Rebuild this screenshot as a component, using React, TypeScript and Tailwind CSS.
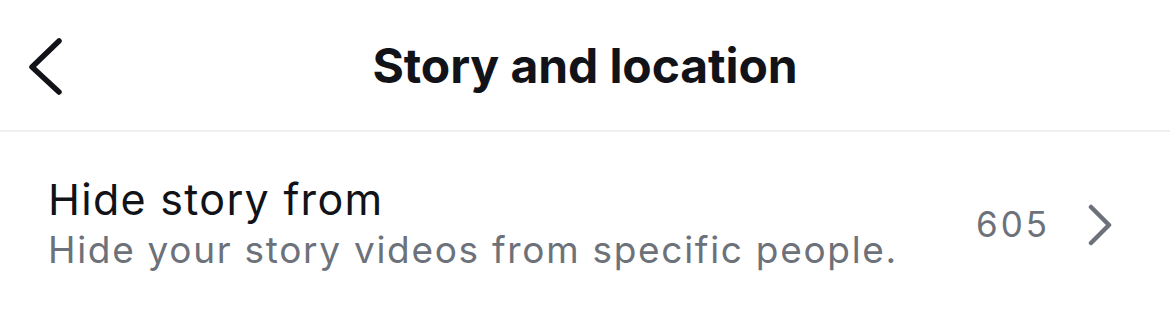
import React from "react";

const App: React.FC = () => {
    return (
        <div className="w-[1170px] h-[333px] bg-white overflow-hidden" style={{ fontFamily: "Inter, 'Noto Sans', sans-serif" }}>
            <header className="relative h-[132px] flex items-center justify-center border-b-2 border-[#efefef]">
                <button className="absolute left-[26px] top-[36px] w-[40px] h-[60px] flex items-center justify-center">
                    <svg width="40" height="60" viewBox="0 0 40 60">
                        <path d="M33 5 L6 31 L33 56" fill="none" stroke="#111318" strokeWidth="5.5" strokeLinecap="round" strokeLinejoin="round" />
                    </svg>
                </button>
                <h1 className="text-[48px] font-bold text-[#111318] tracking-[-0.1px] mt-[2px]">Story and location</h1>
            </header>
            <div className="flex items-center justify-between pl-[48px] pr-[58px] h-[200px]">
                <div className="flex flex-col -mt-[16px]">
                    <span className="text-[43px] leading-[52px] tracking-[1.3px] text-[#111318]">Hide story from</span>
                    <span className="text-[37px] leading-[50px] tracking-[1.7px] text-[#6c717a]">Hide your story videos from specific people.</span>
                </div>
                <div className="flex items-center gap-[38px] -mt-[16px]">
                    <span className="text-[35px] tracking-[3px] text-[#6c717a]">605</span>
                    <svg width="24" height="42" viewBox="0 0 24 42" className="mt-[2px]">
                        <path d="M3 3 L21 21 L3 39" fill="none" stroke="#6c717a" strokeWidth="4.5" strokeLinecap="round" strokeLinejoin="round" />
                    </svg>
                </div>
            </div>
        </div>
    );
};

export default App;
